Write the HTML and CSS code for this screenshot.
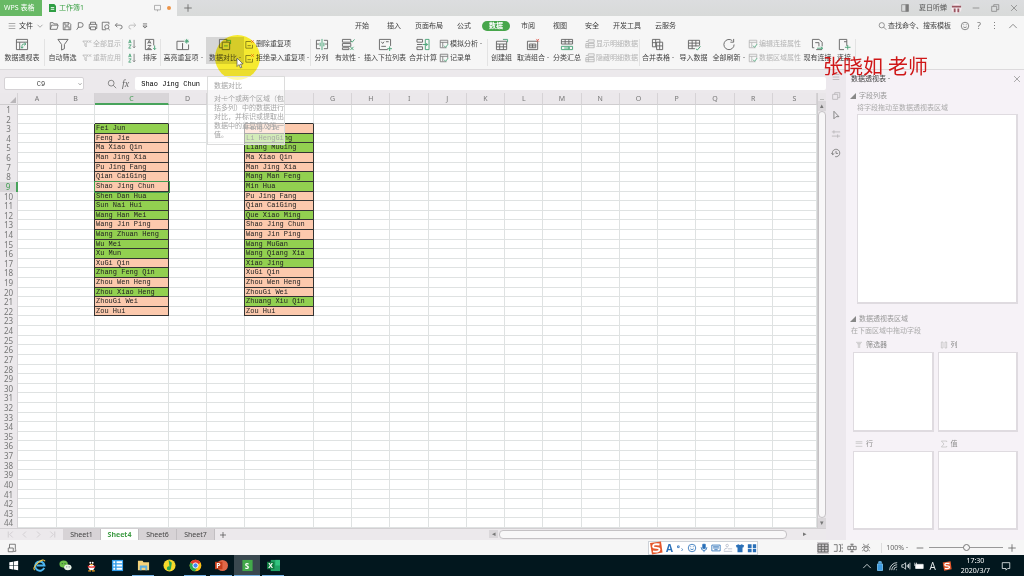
FILE: index.html
```html
<!DOCTYPE html>
<html lang="zh-CN">
<head>
<meta charset="utf-8">
<title>工作簿1 - WPS 表格</title>
<link rel="stylesheet" href="styles.css">
</head>
<body>
<svg class="defs" aria-hidden="true">
  <symbol id="pivot" viewBox="0 0 16 14"><path d="M2 1.500h12v11H2zM2 4.500h12M5.500 4.500v8"/><path class="g" d="M8 11V8q0-1.500 2-1.500h2M10.500 5l1.700 1.500-1.700 1.500M6.700 9.500L8 11l1.500-1.500"/></symbol>
  <symbol id="funnel" viewBox="0 0 16 14"><path d="M2.500 1.500h11L9.500 7v4.500L6.500 13V7z"/></symbol>
  <symbol id="funnelx" viewBox="0 0 12 12"><path d="M1 2.500h6L5 5.500V9.500L3.500 8V5.500zM8 1.500l3 3M11 1.500l-3 3"/></symbol>
  <symbol id="az" viewBox="0 0 10 12"><path class="g" d="M1 5l1.500-4L4 5M1.500 4h2M1 7h3L1 11h3"/><path d="M7.500 1v9.500M6 9l1.500 1.500L9 9"/></symbol>
  <symbol id="sort" viewBox="0 0 16 14"><path d="M12 8V1.500H3v11h7M5.500 6L7.200 2.500 9 6M6 5h2.500M5.500 8H9L5.500 11.500H9"/><path class="g" d="M13 8v4.500M11.500 11l1.500 1.500 1.500-1.500"/></symbol>
  <symbol id="dup" viewBox="0 0 16 14"><path d="M9 3.500H1.500v9h6v-7M14 7v5.500H7.500V6"/><path class="g" d="M12 1v5M9.500 3.500h5M10.500 2l3 3M13.500 2l-3 3"/></symbol>
  <symbol id="cmp" viewBox="0 0 16 14"><path d="M10 4V1.500H2v9h3M5 4.500h8v8H5z"/><path class="g" d="M10 2.500h4v4M7 8.500h4"/></symbol>
  <symbol id="del" viewBox="0 0 12 12"><path d="M7 3H1v8h8V7M3 8h4"/><path class="r" d="M7.500 1.500l3 3M10.500 1.500l-3 3"/></symbol>
  <symbol id="split" viewBox="0 0 16 14"><path d="M6 2.500H2v9h4M10 2.500h4v9h-4M2 6.500h3M11 6.500h3"/><path class="g" d="M8 1v12M6 5v4M10 5v4"/></symbol>
  <symbol id="valid" viewBox="0 0 16 14"><path d="M2 1.500h9v3H2zM2 6h9v3H2zM2 10.500h7v2H2z"/><path class="g" d="M11 3l1.500 1.500L15 1.500M10.500 9.500l3.500 3.500M14 9.500l-3.500 3.500"/></symbol>
  <symbol id="drop" viewBox="0 0 16 14"><path d="M11 12.500H2v-11h12v7M4 4l1.500 2L7 4M9 4h3M4 9h5"/><path class="g" d="M13 9v5M10.500 11.500h5"/></symbol>
  <symbol id="merge" viewBox="0 0 16 14"><path d="M1.500 1.500h6v3h-6zM1.500 9.500h6v3h-6zM1.500 7h6"/><path class="g" d="M10.500 1.500h4v11h-4zM8 7h5M11.500 5.500L13 7l-1.500 1.500"/></symbol>
  <symbol id="form" viewBox="0 0 12 12"><path d="M9 10.500H1.500v-9h9V6M1.500 4h9M4.500 4v6"/><path class="g" d="M6 8l2 2 3-4"/></symbol>
  <symbol id="group" viewBox="0 0 16 14"><path d="M2 3.500h11v9H2zM2 6.500h11M2 9.500h11M5.500 6.500v6M9.500 6.500v6"/><path class="g" d="M9 1.500h5v3"/></symbol>
  <symbol id="ungroup" viewBox="0 0 16 14"><path d="M2 3.500h11v9H2zM4 6.500h7v4H4zM7.500 6.500v4M4 8.500h7"/><path class="r" d="M11.500 1l3 3M14.500 1l-3 3"/></symbol>
  <symbol id="subt" viewBox="0 0 16 14"><path d="M2 1.500h12v5H2zM6 1.500v5M10 1.500v5M2 4h12"/><path class="g" d="M2 9h12v3.500H2zM5 10.800h6M9 9.500l2 1.300-2 1.200"/></symbol>
  <symbol id="detail" viewBox="0 0 12 12"><path d="M1 3h3V1h7v3H4M1 5.500h10v5H1zM1 8h10M4 5.500v5"/></symbol>
  <symbol id="sheets" viewBox="0 0 16 14"><path d="M2 1.500h8v8H2zM2 5h8M5.500 1.500v8"/><path class="f" d="M6.500 4.500H13v8H6.500zM6.500 8.500H13M9.800 4.500v8"/></symbol>
  <symbol id="import" viewBox="0 0 16 14"><path d="M9 11.500H2v-9h12V8M2 5.500h12M2 8.500h12M6 2.500v9M10 2.500V9"/><path class="g" d="M10 11.500l1.500 1.500L15 9"/></symbol>
  <symbol id="refresh" viewBox="0 0 16 14"><path d="M13.500 7A5.500 5.500 0 1 1 11.500 2.800M13 1v3.500H9.500"/></symbol>
  <symbol id="link" viewBox="0 0 16 14"><path d="M4 10.500H2v-9h7l3.500 3V9M12.500 12.500H6M5 5h4v4"/><path class="g" d="M7 11h6M11 9.500l2 1.500-2 1.500"/></symbol>
  <symbol id="plusdoc" viewBox="0 0 16 14"><path d="M8 12.500H3v-11h8v7M8 4h3"/><path class="g" d="M9 10h6M12 7.500v5"/></symbol>
  <symbol id="menu" viewBox="0 0 12 12"><path d="M2 3h8M2 6h8M2 9h8"/></symbol>
  <symbol id="down" viewBox="0 0 12 12"><path d="M3 4.500l3 3 3-3"/></symbol>
  <symbol id="more" viewBox="0 0 12 12"><path d="M3.500 3.500h5M3.500 6L6 8.500 8.500 6z"/></symbol>
  <symbol id="open" viewBox="0 0 12 12"><path d="M1.500 10V2H5l1 1.500h4V5M1.500 10l1.500-5h8l-1.500 5z"/></symbol>
  <symbol id="save" viewBox="0 0 12 12"><path d="M1.500 2h7L10.500 4v6.500h-9zM3.500 2v3h4V2M3.500 10.500V7h5v3.500"/></symbol>
  <symbol id="out" viewBox="0 0 12 12"><path d="M4 8V2h3a2 2 0 0 1 0 5.500H4L2 10.500"/></symbol>
  <symbol id="print" viewBox="0 0 12 12"><path d="M3 4V1.500h6V4M3 9H1.500V4h9v5H9M3 7h6v3.500H3z"/></symbol>
  <symbol id="preview" viewBox="0 0 12 12"><path d="M6 10.500H1.500v-9h8V4M8.500 9l2 2"/><circle cx="7" cy="7" r="2.500"/></symbol>
  <symbol id="undo" viewBox="0 0 12 12"><path d="M2 5h5.500a2 2 0 0 1 0 4.500H7M4 2.500L1.500 5 4 7.500"/></symbol>
  <symbol id="redo" viewBox="0 0 12 12"><path d="M10 5H4.500a2 2 0 0 0 0 4.500H5M8 2.500L10.500 5 8 7.500"/></symbol>
  <symbol id="search" viewBox="0 0 12 12"><circle cx="5" cy="5" r="3.500"/><path d="M7.500 7.500L11 11"/></symbol>
  <symbol id="face" viewBox="0 0 12 12"><circle cx="6" cy="6" r="4.500"/><path d="M4 7q2 2 4 0M4.500 4v1M7.500 4v1"/></symbol>
  <symbol id="up" viewBox="0 0 12 12"><path d="M1.500 8.500L6 4l4.500 4.500"/></symbol>
  <symbol id="x" viewBox="0 0 12 12"><path d="M2.500 2.500l7 7M9.500 2.500l-7 7"/></symbol>
  <symbol id="plus" viewBox="0 0 12 12"><path d="M6 1.500v9M1.500 6h9"/></symbol>
  <symbol id="minus" viewBox="0 0 12 12"><path d="M2 6h8"/></symbol>
  <symbol id="restore" viewBox="0 0 12 12"><path d="M2 4h6v6H2zM4.500 4V2h6v6H8"/></symbol>
  <symbol id="dock" viewBox="0 0 12 12"><path d="M2 2h8v8H2z"/><path d="M7 2h3v8H7z" fill="#777"/></symbol>
  <symbol id="arrow" viewBox="0 0 12 12"><path d="M3.500 1.500v9L6 8h3.500z"/></symbol>
  <symbol id="tune" viewBox="0 0 12 12"><path d="M1 3.500h10M3.500 1.500v4M1 8.500h10M8 6.500v4"/></symbol>
  <symbol id="hist" viewBox="0 0 12 12"><path d="M2 8A4.500 4.500 0 1 1 5 10.400M6 3.500V6.500h2.500M.5 6L2 8l2-1.500"/></symbol>
  <symbol id="first" viewBox="0 0 12 12"><path d="M3 2v8M9 2L5 6l4 4"/></symbol>
  <symbol id="prev" viewBox="0 0 12 12"><path d="M8 2L4 6l4 4"/></symbol>
  <symbol id="next" viewBox="0 0 12 12"><path d="M4 2l4 4-4 4"/></symbol>
  <symbol id="last" viewBox="0 0 12 12"><path d="M9 2v8M3 2l4 4-4 4"/></symbol>
  <symbol id="gridv" viewBox="0 0 12 12"><path d="M1 2h10v8H1zM1 4.700h10M1 7.300h10M4.300 2v8M7.700 2v8"/></symbol>
  <symbol id="pagev" viewBox="0 0 12 12"><path d="M1 2h4v8H1M7 2h2v8H7M11 1v2M11 5v2M11 9v2"/></symbol>
  <symbol id="cross" viewBox="0 0 12 12"><path d="M6 1v3M6 8v3M1 8V4h10v4zM4 4v4M8 4v4M4 1.500h4M4 10.500h4"/></symbol>
  <symbol id="eye" viewBox="0 0 12 12"><circle cx="6" cy="7.500" r="2.500"/><path d="M1 6q5-5 10 0M3 1l1 2M9 1L8 3M1.500 9.500l1.500-1M10.500 9.500L9 8.500"/></symbol>
  <symbol id="macro" viewBox="0 0 12 12"><path d="M3 6V1.500h7V8M1.500 6h6v4.500h-6zM8 10h2.500V8"/></symbol>
  <symbol id="filters" viewBox="0 0 12 12"><path d="M1.500 2h9M3 4h6M5 4v6.500M7 4v6.500"/></symbol>
  <symbol id="cols" viewBox="0 0 12 12"><path d="M2 1.500h2.500v9H2zM7.500 1.500H10v9H7.500z"/></symbol>
  <symbol id="rows" viewBox="0 0 12 12"><path d="M1 2.500h10M1 5h10M1 9.500h10"/></symbol>
  <symbol id="sigma" viewBox="0 0 12 12"><path d="M10 3V1.500H2L6 6l-4 4.500h8V9"/></symbol>
  <symbol id="sogou" viewBox="0 0 14 14"><path d="M1 2l11-1.500 1.500 11L3 13.500z" fill="#e4572b" stroke="none"/><path d="M10.500 3.500Q4 2.500 4 5.300q0 1.600 3.200 1.600T10.500 8.500Q10.500 11.500 4 10.300" stroke="#fff" stroke-width="1.800"/></symbol>
</svg>

<header class="titlebar">
  <button class="apptab">WPS 表格</button>
  <div class="doctab">
    <svg class="docico" viewBox="0 0 8 9"><path d="M0 0h6l2 2v7H0z" fill="#2f9e44"/><path d="M2 4h4M2 6h4" stroke="#fff"/></svg>
    <span>工作簿1</span>
    <svg class="i screen" viewBox="0 0 12 12"><path d="M2 2.500h8v6H2zM6 8.500v2"/></svg>
    <i class="dot"></i>
  </div>
  <button class="newtab" aria-label="新建"><svg class="i"><use href="#plus"/></svg></button>
  <div class="winctl">
    <svg class="i"><use href="#dock"/></svg>
    <span class="user">夏日听蝉</span>
    <svg class="avatar" viewBox="0 0 12 12"><circle cx="6" cy="6" r="5.500" fill="#f3e9ec"/><path d="M1 3h10v2H1zM3 6h2v4H3zM7 6h2v4H7z" fill="#9a5560"/></svg>
    <svg class="i"><use href="#minus"/></svg>
    <svg class="i"><use href="#restore"/></svg>
    <svg class="i"><use href="#x"/></svg>
  </div>
</header>

<nav class="menubar">
  <div class="quick">
    <button class="file"><svg class="i faint"><use href="#menu"/></svg>文件<svg class="i faint"><use href="#down"/></svg></button>
    <svg class="i"><use href="#open"/></svg><svg class="i"><use href="#save"/></svg><svg class="i"><use href="#out"/></svg><svg class="i"><use href="#print"/></svg><svg class="i"><use href="#preview"/></svg><svg class="i"><use href="#undo"/></svg><svg class="i faint"><use href="#redo"/></svg><svg class="i"><use href="#more"/></svg>
  </div>
  <div class="tabs">
    <button>开始</button><button>插入</button><button class="long">页面布局</button><button>公式</button><button class="on">数据</button><button>市阅</button><button>视图</button><button>安全</button><button class="long">开发工具</button><button>云服务</button>
  </div>
  <div class="find">
    <svg class="i"><use href="#search"/></svg><span>查找命令、搜索模板</span>
    <svg class="i gap"><use href="#face"/></svg><span class="mark">?</span><span class="mark">⋮</span><svg class="i"><use href="#up"/></svg>
  </div>
</nav>

<section class="ribbon">
  <button class="big"><svg><use href="#pivot"/></svg><span>数据透视表</span></button>
  <button class="big sep"><svg><use href="#funnel"/></svg><span>自动筛选</span></button>
  <div class="stack off"><button><svg class="i"><use href="#funnelx"/></svg>全部显示</button><button><svg class="i"><use href="#funnelx"/></svg>重新应用</button></div>
  <div class="stack sep"><button aria-label="升序"><svg class="i"><use href="#az"/></svg></button><button aria-label="降序"><svg class="i"><use href="#az"/></svg></button></div>
  <button class="big"><svg><use href="#sort"/></svg><span>排序</span></button>
  <button class="big sep"><svg><use href="#dup"/></svg><span class="dd">高亮重复项</span></button>
  <button class="big active"><svg><use href="#cmp"/></svg><span class="dd">数据对比</span></button>
  <div class="stack"><button><svg class="i"><use href="#del"/></svg>删除重复项</button><button><svg class="i"><use href="#del"/></svg><span class="dd">拒绝录入重复项</span></button></div>
  <button class="big sep"><svg><use href="#split"/></svg><span>分列</span></button>
  <button class="big"><svg><use href="#valid"/></svg><span class="dd">有效性</span></button>
  <button class="big"><svg><use href="#drop"/></svg><span>插入下拉列表</span></button>
  <button class="big"><svg><use href="#merge"/></svg><span>合并计算</span></button>
  <div class="stack"><button><svg class="i"><use href="#form"/></svg><span class="dd">模拟分析</span></button><button><svg class="i"><use href="#form"/></svg>记录单</button></div>
  <button class="big sep"><svg><use href="#group"/></svg><span>创建组</span></button>
  <button class="big"><svg><use href="#ungroup"/></svg><span class="dd">取消组合</span></button>
  <button class="big"><svg><use href="#subt"/></svg><span>分类汇总</span></button>
  <div class="stack off"><button><svg class="i"><use href="#detail"/></svg>显示明细数据</button><button><svg class="i"><use href="#detail"/></svg>隐藏明细数据</button></div>
  <button class="big sep"><svg><use href="#sheets"/></svg><span class="dd">合并表格</span></button>
  <button class="big"><svg><use href="#import"/></svg><span>导入数据</span></button>
  <button class="big"><svg><use href="#refresh"/></svg><span class="dd">全部刷新</span></button>
  <div class="stack off"><button><svg class="i"><use href="#form"/></svg>编辑连接属性</button><button><svg class="i"><use href="#form"/></svg>数据区域属性</button></div>
  <button class="big"><svg><use href="#link"/></svg><span>现有连接</span></button>
  <button class="big"><svg><use href="#plusdoc"/></svg><span>连接</span></button>
  <div class="sep"></div>
</section>

<main class="work">
  <section class="book">
    <div class="fbar">
      <label class="namebox"><input value="C9" aria-label="名称框"><svg class="i"><use href="#down"/></svg></label>
      <svg class="i zoomico"><use href="#search"/></svg><em>fx</em>
      <input class="formula" value="Shao Jing Chun" aria-label="编辑栏">
    </div>
    <div class="sheetwrap">
      <table class="sheet"><thead></thead><tbody></tbody></table>
      <div class="vscroll"><b class="cut"></b><button aria-label="向上">▴</button><b class="thumb"></b><button aria-label="向下">▾</button></div>
    </div>
    <div class="tabbar">
      <div class="navs"><svg class="i"><use href="#first"/></svg><svg class="i"><use href="#prev"/></svg><svg class="i"><use href="#next"/></svg><svg class="i"><use href="#last"/></svg></div>
      <button class="st">Sheet1</button><button class="st on">Sheet4</button><button class="st">Sheet6</button><button class="st">Sheet7</button>
      <button class="add" aria-label="新建工作表"><svg class="i"><use href="#plus"/></svg></button>
      <div class="hscroll"><button aria-label="向左">◂</button><b class="thumb"></b><button aria-label="向右">▸</button></div>
    </div>
  </section>
  <aside class="strip">
    <svg class="i faint"><use href="#menu"/></svg><svg class="i faint"><use href="#restore"/></svg><svg class="i"><use href="#arrow"/></svg><svg class="i faint"><use href="#tune"/></svg><svg class="i"><use href="#hist"/></svg>
  </aside>
  <aside class="panel">
    <div class="ptitle"><span class="dd">数据透视表</span><svg class="i"><use href="#x"/></svg></div>
    <h2>字段列表</h2>
    <p class="in">将字段拖动至数据透视表区域</p>
    <div class="box fields"></div>
    <h2>数据透视表区域</h2>
    <p>在下面区域中拖动字段</p>
    <div class="zones">
      <div class="zone"><h3><svg class="i"><use href="#filters"/></svg>筛选器</h3><div class="box"></div></div>
      <div class="zone"><h3><svg class="i"><use href="#cols"/></svg>列</h3><div class="box"></div></div>
      <div class="zone"><h3><svg class="i"><use href="#rows"/></svg>行</h3><div class="box"></div></div>
      <div class="zone"><h3><svg class="i"><use href="#sigma"/></svg>值</h3><div class="box"></div></div>
    </div>
  </aside>
</main>

<footer class="status">
  <svg class="i"><use href="#macro"/></svg>
  <div class="views">
    <svg class="i cur"><use href="#gridv"/></svg><svg class="i"><use href="#pagev"/></svg><svg class="i"><use href="#cross"/></svg><svg class="i"><use href="#eye"/></svg>
    <span class="dd pct">100%</span>
    <svg class="i"><use href="#minus"/></svg>
    <input type="range" min="0" max="100" value="50" aria-label="缩放">
    <svg class="i"><use href="#plus"/></svg>
  </div>
</footer>

<footer class="taskbar">
  <div class="apps">
    <button aria-label="开始菜单"><svg viewBox="0 0 14 14"><path d="M2.500 3.500l4-.6v3.800h-4zM7.200 2.800l4.800-.8v4.700H7.200zM2.500 7.400h4v3.800l-4-.6zM7.200 7.400H12V12l-4.800-.8z" fill="#fff"/></svg></button>
    <button aria-label="浏览器"><svg viewBox="0 0 14 14"><path d="M12 9.500A5 5 0 1 1 12.300 7H4" fill="none" stroke="#4db5ee" stroke-width="2.200"/><path d="M2 12Q-1 10 5 4.500T13 2.500" fill="none" stroke="#f3c84b" stroke-width="1.200"/></svg></button>
    <button aria-label="微信"><svg viewBox="0 0 14 14"><ellipse cx="5" cy="5.500" rx="4.500" ry="3.800" fill="#6cc04a"/><ellipse cx="9.500" cy="9" rx="4" ry="3.200" fill="#e9f3e6"/><path d="M3 5h1M6 5h1M8 8.500h.8M10.500 8.500h.8" stroke="#234"/></svg></button>
    <button aria-label="QQ"><svg viewBox="0 0 14 14"><ellipse cx="7" cy="6" rx="3.800" ry="5" fill="#111"/><ellipse cx="7" cy="9" rx="3.200" ry="3.200" fill="#fff"/><path d="M3 7q4 2 8 0v1.800q-4 1.500-8 0z" fill="#e33"/><circle cx="5.700" cy="4" r="1" fill="#fff"/><circle cx="8.300" cy="4" r="1" fill="#fff"/><path d="M5 5.500h4L7 7zM3.500 12h3v1.500h-3zM7.500 12h3v1.500h-3z" fill="#f5a623"/></svg></button>
    <button aria-label="视频"><svg viewBox="0 0 14 14"><path d="M1 1h12v12H1z" fill="#2f9bea"/><path d="M2.500 3.500h2M2.500 7h2M2.500 10.500h2M6 3.500h6M6 7h6M6 10.500h6" stroke="#fff" stroke-width="2"/></svg></button>
    <button class="run" aria-label="资源管理器"><svg viewBox="0 0 14 14"><path d="M1 2h5l1 1.500h6V12H1z" fill="#f4d27a"/><path d="M3 7h8v5H9V9.500H5V12H3z" fill="#5eaede"/></svg></button>
    <button aria-label="音乐"><svg viewBox="0 0 14 14"><circle cx="7" cy="7" r="6.500" fill="#f7d92b"/><path d="M6 1l3.500 3-1 6.500a2.200 2.200 0 1 1-1.500-2.500z" fill="#2da653"/></svg></button>
    <button class="run" aria-label="Chrome"><svg viewBox="0 0 14 14"><circle cx="7" cy="7" r="6.300" fill="#fbc116"/><path d="M7 7L1.500 4A6.300 6.300 0 0 1 12.500 4z" fill="#e33b2e"/><path d="M7 7L1.500 4A6.300 6.300 0 0 0 6.500 13.300L9 9z" fill="#2da94f"/><circle cx="7" cy="7" r="2.800" fill="#4286f5" stroke="#fff"/></svg></button>
    <button class="run ppt" aria-label="PowerPoint"><svg viewBox="0 0 14 14"><circle cx="8" cy="7" r="6" fill="#e06848"/><path d="M0 3h8v8H0z" fill="#c43e1c"/></svg><b>P</b></button>
    <button class="run now" aria-label="WPS 表格"><svg viewBox="0 0 14 14"><path d="M1.500 1h11v12h-11z" fill="#42a94a"/></svg><b>S</b></button>
    <button class="run ppt" aria-label="Excel"><svg viewBox="0 0 14 14"><path d="M4 1h10v12H4z" fill="#21a366"/><path d="M9 1h5v6H9z" fill="#33c481"/><path d="M0 3h8v8H0z" fill="#107c41"/></svg><b>X</b></button>
  </div>
  <div class="tray">
    <svg class="i"><use href="#up"/></svg>
    <svg class="i" viewBox="0 0 12 12"><path d="M3 3.500h6v8H3zM4.500 3V.8h3V3" fill="#3c9be0" stroke="#7cc4f2"/></svg>
    <svg class="i" viewBox="0 0 12 12"><path d="M2 11A9 9 0 0 1 11 2M4.500 11A6.500 6.500 0 0 1 11 4.500M7 11a4 4 0 0 1 4-4M9.500 10.500h1"/></svg>
    <svg class="i" viewBox="0 0 12 12"><path d="M1 4.500h2L5.500 2v8L3 7.500H1zM7.500 4.500v3M9 3.500v5M10.700 2v8"/></svg>
    <svg class="i" viewBox="0 0 12 12"><path d="M2 4h9v5H2z" fill="#fff"/><path d="M1 2v4M3 2v3"/></svg>
    <b>A</b>
    <svg class="i sg"><use href="#sogou"/></svg>
    <time>17:30<br>2020/3/7</time>
    <svg class="i note" viewBox="0 0 12 12"><path d="M1.500 2h9v7H8L6 11V9H1.500z"/></svg>
  </div>
</footer>

<div class="spot"></div>
<svg class="cursor" viewBox="0 0 8 12"><path d="M1 1v8.500l2-2 1.500 3.500 1.300-.6L4.500 7H7z" fill="#fff" stroke="#555" stroke-width=".7"/></svg>
<div class="tip" role="tooltip"><p>数据对比</p><p>对一个或两个区域（包<br>括多列）中的数据进行<br>对比，并标识或提取出<br>数据中的重复值及唯一<br>值。</p></div>
<div class="teacher">张晓如 老师</div>
<div class="ime">
  <svg class="sg"><use href="#sogou"/></svg><b>A</b>
  <svg class="i" viewBox="0 0 12 12"><path d="M3 3.500h2v2H3zM8 6.500q2 1 0 3"/></svg>
  <svg class="i"><use href="#face"/></svg>
  <svg class="i" viewBox="0 0 12 12"><path d="M4.500 1.500h3v5h-3z" fill="currentColor"/><path d="M2.500 5q0 4 3.500 4T9.500 5M6 9v2"/></svg>
  <svg class="i" viewBox="0 0 12 12"><path d="M1 2.500h10v7H1zM2.500 4.500h7M2.500 6h7M4 8h4"/></svg>
  <svg class="i pale" viewBox="0 0 12 12"><circle cx="5" cy="3" r="1.500"/><path d="M1.500 9q0-3 4-3M6 7h5M1 10h10"/></svg>
  <svg class="i" viewBox="0 0 12 12"><path d="M1 3l3-1.500q2 1.500 4 0L11 3 10 5.500H9V11H3V5.500H2z" fill="currentColor" stroke="none"/></svg>
  <svg class="i" viewBox="0 0 12 12"><path d="M1 1.500h4.500V6H1zM7 1.500h4V6H7zM1 7h4.500v4H1zM7 7h4v4H7z" fill="currentColor" stroke="none"/></svg>
</div>
<script src="app.js"></script>
</body>
</html>
```
FILE: styles.css
```css
* { box-sizing: border-box; }
body {
  margin: 0; height: 100vh; display: flex; flex-direction: column; overflow: hidden; position: relative;
  font: 7px/10px "Noto Sans", "Noto Sans CJK SC", sans-serif; color: #444; background: #f6f6f6;
}
button, input { font: inherit; color: inherit; border: 0; background: none; padding: 0; margin: 0; outline: 0; white-space: nowrap; }
p, h2, h3 { margin: 0; font: inherit; }
svg { fill: none; stroke: currentColor; stroke-width: 1; flex: none; }
.defs { position: absolute; width: 0; height: 0; }
.i { width: 10px; height: 10px; display: block; }
.g { stroke: #4aa377; }
.r { stroke: #e2665c; }
.f { fill: #f6f6f6; }
.faint { opacity: .45; }
.dd::after { content: ""; display: inline-block; margin-left: 2px; vertical-align: 2px; border: 1px solid transparent; border-top-color: #666; border-bottom: 0; }

.titlebar { flex: 0 0 16px; display: flex; align-items: stretch; background: linear-gradient(#dcdddf, #d8dad9); }
.apptab { width: 42px; background: #68b965; color: #fff; text-align: left; padding-left: 4px; }
.doctab { width: 135px; background: #f6f6f6; color: #3aa044; display: flex; align-items: center; padding: 0 6px 0 7px; gap: 3px; }
.docico { width: 7px; height: 8px; stroke: none; }
.screen { margin-left: auto; color: #999; width: 9px; }
.dot { width: 4px; height: 4px; border-radius: 2px; background: #ec9448; margin-left: 2px; }
.newtab { width: 22px; display: grid; place-items: center; color: #666; }
.winctl { margin-left: auto; display: flex; align-items: center; gap: 9px; padding-right: 5px; color: #8a8a8a; }
.user { color: #555; margin-right: -5px; }
.avatar { width: 11px; height: 11px; stroke: none; }

.menubar { flex: 0 0 20px; display: flex; align-items: center; position: relative; }
.quick { display: flex; align-items: center; gap: 3px; padding-left: 7px; width: 355px; color: #666; }
.file { display: flex; align-items: center; gap: 2px; margin-right: 1px; color: #333; }
.tabs { display: flex; gap: 18px; color: #3c3c3c; }
.tabs .long { margin: 0 -4px; }
.tabs .on { background: #47a64b; color: #fff; font-weight: 700; border-radius: 5px; padding: 0 7px; margin: 0 -7px; }
.find { margin-left: auto; display: flex; align-items: center; padding-right: 6px; gap: 9px; }
.find .i { color: #777; }
.find .i:first-child { margin-right: -8px; width: 9px; }
.find .gap { margin-right: -2px; }
.mark { font-size: 9px; color: #777; }

.ribbon {
  flex: 0 0 34px; display: grid; border-bottom: 1px solid #dcdadc;
  grid-template-columns: 44px 37px 41px 18px 20px 46px 38px 66px 23px 29px 46px 30px 49px 29px 34px 34px 55px 38px 33px 37px 55px 31px 22px 1fr;
}
.big { display: flex; flex-direction: column; align-items: center; justify-content: center; gap: 2px; overflow: visible; min-width: 0; }
.big svg { width: 16px; height: 13px; color: #666; }
.active { background: #d6d6d6; margin: 1px 0 5px; }
.big:not(.active) { padding-bottom: 4px; }
.sep { position: relative; }
.sep::before { content: ""; position: absolute; left: 0; top: 3px; bottom: 3px; width: 1px; background: #e3e3e3; }
.stack { display: flex; flex-direction: column; justify-content: center; gap: 4px; padding: 0 0 4px 1px; }
.stack .i { color: #777; }
.stack.sep { padding-left: 5px; }
.stack button { display: flex; align-items: center; gap: 1px; height: 10px; }
.off, .off .i { color: #b4b4b4; }
.off { --g: #b4b4b4; }

.work { flex: 1; min-height: 0; display: grid; grid-template-columns: minmax(0, 1fr) 20px 178px; }
.book { display: flex; flex-direction: column; min-height: 0; background: #ece9ec; }
.fbar { height: 23px; display: flex; align-items: center; padding: 4px 0 0 4px; flex: none; }
.namebox { display: flex; align-items: center; width: 80px; height: 13px; background: #fff; border: 1px solid #d5d2d5; border-radius: 2px; }
.namebox input { flex: 1; min-width: 0; text-align: center; font: 7px "Liberation Mono", monospace; }
.namebox .i { width: 6px; }
.zoomico { margin-left: 23px; color: #777; }
.fbar em { margin: 0 6px 0 5px; font: italic 10px "Liberation Serif", serif; color: #666; }
.formula { flex: 1; min-width: 0; height: 13px; background: #fff; border-radius: 2px; padding-left: 6px; font: 7px "Liberation Mono", monospace; color: #000; }

.sheetwrap { flex: 1; min-height: 0; display: grid; grid-template-columns: minmax(0, 1fr) 8px; }
.sheet { display: flex; flex-direction: column; background: #fff; min-height: 0; border-right: 1px solid #cfcdcf; }
.sheet thead { display: block; height: 12px; }
.sheet tbody { flex: 1; min-height: 0; display: grid; grid-template-rows: repeat(44, minmax(0, 1fr)); }
.sheet tr { display: grid; grid-template-columns: 18px 39px 38px 74px 38px 38px 69px repeat(12, minmax(0, 38fr)) minmax(0, 44fr); grid-template-rows: minmax(0, 1fr); min-height: 0; }
.sheet th { padding: 0; font-weight: 400; background: #ebe8eb; color: #777; text-align: center; border-right: 1px solid #d6d3d6; overflow: hidden; }
.sheet thead th { height: 12px; line-height: 12px; border-bottom: 1px solid #cfcdcf; }
.sheet tbody th { line-height: 9px; font-size: 8px; }
.sheet thead .hot { background: #d8d5d8; color: #3f9c50; border-bottom: 2px solid #48a35b; }
.sheet tbody .hot { background: #d8d5d8; color: #3f9c50; border-right: 2px solid #48a35b; }
.corner { display: flex; align-items: flex-end; justify-content: flex-end; }
.corner::after { content: ""; border: 3px solid #b9b6b9; border-top-color: transparent; border-left-color: transparent; margin: 1px; }
.sheet td { padding: 0 0 0 1px; border-right: 1px solid #dfe2e2; border-bottom: 1px solid #dfe2e2; font: 7px/9px "Liberation Mono", monospace; color: #222; white-space: nowrap; min-width: 0; min-height: 0; }
.sheet .same, .sheet .diff { border-color: #333; box-shadow: -1px 0 #333; }
.sheet .same { background: #fcc9ad; }
.sheet .diff { background: #92d050; }
.sheet .edge { border-bottom-color: #333; }
.sheet .picked { outline: 1px solid #3f9c50; position: relative; }

.vscroll { display: flex; flex-direction: column; background: #e9e6e9; }
.vscroll button, .hscroll button { background: #dad7da; color: #777; height: 10px; line-height: 10px; }
.cut { height: 7px; border-bottom: 1px solid #bbb; margin: 0 2px 1px; }
.thumb { flex: 1; background: #f8f7f8; border: 1px solid #c4c1c4; border-radius: 4px; }

.tabbar { height: 12px; flex: none; display: flex; align-items: stretch; border-top: 1px solid #d2cfd2; }
.navs { width: 63px; display: flex; align-items: center; gap: 5px; padding-left: 6px; color: #c9c6c9; }
.navs .i { width: 9px; height: 9px; }
.st { width: 38px; background: #d7d3d6; border-right: 1px solid #c2bfc2; }
.st.on { background: #fff; color: #3f9c45; font-weight: 700; }
.add { width: 15px; display: grid; place-items: center; }
.add .i { width: 8px; height: 8px; }
.hscroll { margin-left: auto; width: 337px; padding: 1px 17px 1px 0; display: flex; gap: 1px; }
.hscroll button { width: 9px; height: 8px; line-height: 8px; }
.hscroll button:last-child { margin-left: 12px; background: none; }

.strip { background: #ece8ed; display: flex; flex-direction: column; align-items: center; gap: 9px; padding-top: 2px; color: #777; }
.panel { background: #f6f2f7; padding: 4px 6px 10px 5px; display: flex; flex-direction: column; color: #aaa; min-height: 0; }
.ptitle { display: flex; justify-content: space-between; color: #444; margin-bottom: 7px; margin-right: -4px; }
.ptitle .i { color: #999; }
.panel h2 { line-height: 10px; color: #999; display: flex; align-items: center; gap: 3px; margin-bottom: 2px; }
.panel h2::before { content: ""; border: 3px solid #888; border-top-color: transparent; border-left-color: transparent; margin-left: -1px; }
.in { padding-left: 6px; }
.box { background: #fff; border: 1px solid #dfdbe0; border-right-width: 2px; border-bottom-width: 2px; }
.fields { height: 190px; margin: 1px 0 10px 6px; }
.zones { flex: 1; min-height: 0; display: grid; grid-template-columns: 1fr 1fr; grid-template-rows: 1fr 1fr; gap: 7px 4px; margin: 4px 0 0 2px; }
.zone { display: flex; flex-direction: column; }
.zone .box { flex: 1; }
.zone h3 { display: flex; align-items: center; gap: 3px; padding-left: 2px; margin-bottom: 2px; color: #8d8d8d; }
.zone .i { color: #bbb; width: 8px; height: 8px; }

.status { flex: 0 0 15px; display: flex; align-items: center; justify-content: space-between; padding: 0 7px; background: #f6f6f6; color: #666; }
.views { display: flex; align-items: center; gap: 4px; }
.views .cur { background: #cfcccf; width: 12px; height: 12px; }
.pct { border-left: 1px solid #ddd; padding: 0 3px 0 4px; margin-left: 6px; }
.views input { appearance: none; width: 74px; height: 8px; background: linear-gradient(#999, #999) center / 100% 1px no-repeat; }
.views input::-webkit-slider-thumb { appearance: none; width: 7px; height: 7px; border: 1px solid #777; border-radius: 4px; background: #f6f6f6; }

.taskbar { flex: 0 0 21px; display: flex; justify-content: space-between; background: #02171e; color: #e6eaec; }
.apps { display: flex; }
.apps button { width: 26px; display: grid; place-items: center; position: relative; }
.apps svg { width: 13px; height: 13px; stroke: none; grid-area: 1 / 1; }
.apps b { grid-area: 1 / 1; font-size: 8px; color: #fff; }
.apps .ppt b { margin-right: 5px; font-size: 7px; }
.run { border-bottom: 2px solid #77b4e6; background-clip: padding-box; margin: 0 2px; }
.apps .run { width: 22px; padding-top: 1px; border-bottom: 1px solid #77b4e6; margin: 0 2px; }
.apps .now { width: 26px; margin: 0; background: #39484f; }
.tray { display: flex; align-items: center; gap: 3px; padding-right: 13px; position: relative; }
.tray b { font: 10px "Open Sans", sans-serif; margin: 0 3px 0 2px; }
.tray time { text-align: center; margin: 0 8px 0 6px; color: #fff; }

.spot { position: absolute; left: 215px; top: 35px; width: 45px; height: 45px; border-radius: 50%; background: #fff21a; opacity: .9; mix-blend-mode: multiply; }
.cursor { position: absolute; left: 236px; top: 57px; width: 8px; height: 12px; }
.tip { position: absolute; left: 207px; top: 76px; width: 78px; height: 69px; padding: 4px 0 0 6px; background: rgba(255, 255, 255, .6); border: 1px solid #dcdcdc; color: #a5a5a5; line-height: 9px; white-space: nowrap; }
.tip p { margin-bottom: 4px; }
.teacher { position: absolute; left: 823px; top: 54px; font: 400 20px/26px "Liberation Serif", "Noto Sans CJK SC", serif; color: #cf1717; white-space: nowrap; }
.ime { position: absolute; left: 648px; top: 541px; width: 110px; height: 14px; display: flex; align-items: center; gap: 2px; background: #fff; border: 1px solid #cdd2d8; color: #2a70b8; }
.ime b { font: 700 10px "Open Sans", sans-serif; }
.ime .sg { width: 14px; height: 14px; margin-right: 1px; }
.ime .pale { color: #b4bccb; }
```
FILE: app.js
```js
// "=" marks a name found in both lists, "-" a name found in one list only
const listC = ["-Fei Jun", "=Feng Jie", "=Ma Xiao Qin", "=Man Jing Xia", "=Pu Jing Fang", "=Qian CaiGing", "=Shao Jing Chun", "-Shen Dan Hua", "-Sun Nai Hui", "-Wang Han Mei", "=Wang Jin Ping", "-Wang Zhuan Heng", "-Wu Mei", "-Xu Mun", "=XuGi Qin", "-Zhang Feng Qin", "=Zhou Wen Heng", "-Zhou Xiao Heng", "=ZhouGi Wei", "=Zou Hui"];
const listF = ["=Feng Jie", "-Li HengGing", "-Liang MuGing", "=Ma Xiao Qin", "=Man Jing Xia", "-Mang Man Feng", "-Min Hua", "=Pu Jing Fang", "=Qian CaiGing", "-Que Xiao Ming", "=Shao Jing Chun", "=Wang Jin Ping", "-Wang MuGan", "-Wang Qiang Xia", "-Xiao Jing", "=XuGi Qin", "=Zhou Wen Heng", "=ZhouGi Wei", "-Zhuang Xiu Qin", "=Zou Hui"];
const cols = "ABCDEFGHIJKLMNOPQRS".split("");
const firstRow = 3;

document.querySelector(".sheet thead").innerHTML =
  '<tr><th class="corner"></th>' + cols.map(c => `<th${c === "C" ? ' class="hot"' : ""}>${c}</th>`).join("") + "</tr>";

let rows = "";
for (let r = 1; r <= 44; r++) {
  rows += `<tr><th${r === 9 ? ' class="hot"' : ""}>${r}</th>`;
  for (const c of cols) {
    const list = c === "C" ? listC : c === "F" ? listF : null;
    const item = list && list[r - firstRow];
    const cls = [];
    if (item) cls.push(item[0] === "=" ? "same" : "diff");
    if (list && r === firstRow - 1) cls.push("edge");
    if (c === "C" && r === 9) cls.push("picked");
    rows += `<td class="${cls.join(" ")}">${item ? item.slice(1) : ""}</td>`;
  }
  rows += "</tr>";
}
document.querySelector(".sheet tbody").innerHTML = rows;
```
